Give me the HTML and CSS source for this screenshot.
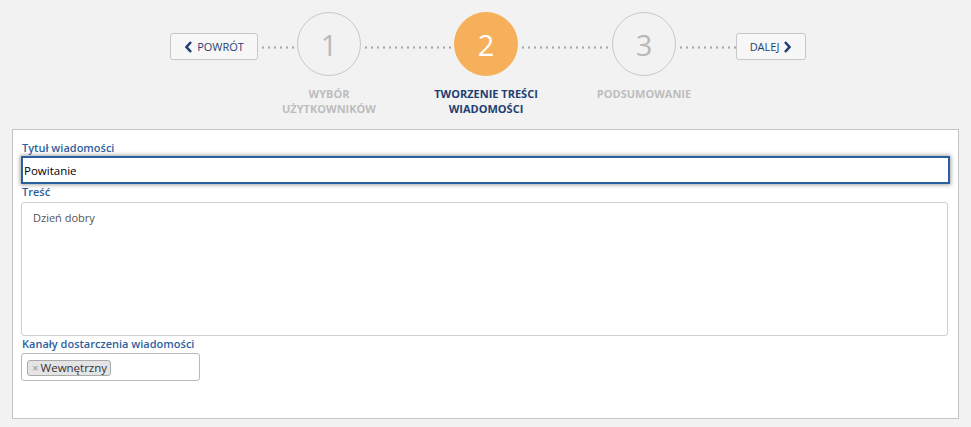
FILE: index.html
```html
<!DOCTYPE html>
<html lang="pl">
<head>
    <meta charset="UTF-8">
    <meta name="viewport" content="width=device-width, initial-scale=1.0">
    <title>Nowa wiadomość</title>
    <link rel="stylesheet" href="styles.css">
</head>
<body>

<div class="wizard">
    <button class="nav-btn prev">
        <svg width="9" height="12" viewBox="0 0 9 12"><path d="M7 1 L2.5 6 L7 11" fill="none" stroke="#1f3f73" stroke-width="2.6"/></svg>
        POWRÓT
    </button>
    <div class="dots w39"></div>
    <div class="step">
        <div class="circle">1</div>
        <div class="step-label">WYBÓR<br>UŻYTKOWNIKÓW</div>
    </div>
    <div class="dots w93"></div>
    <div class="step active">
        <div class="circle">2</div>
        <div class="step-label">TWORZENIE TREŚCI<br>WIADOMOŚCI</div>
    </div>
    <div class="dots w94"></div>
    <div class="step">
        <div class="circle">3</div>
        <div class="step-label">PODSUMOWANIE</div>
    </div>
    <div class="dots w60"></div>
    <button class="nav-btn next">
        DALEJ
        <svg width="9" height="12" viewBox="0 0 9 12"><path d="M2 1 L6.5 6 L2 11" fill="none" stroke="#1f3f73" stroke-width="2.6"/></svg>
    </button>
</div>

<div class="panel">
    <label class="field-label">Tytuł wiadomości</label>
    <input class="title-input" type="text" value="Powitanie">

    <label class="field-label">Treść</label>
    <div class="content-box">Dzień dobry</div>

    <label class="field-label">Kanały dostarczenia wiadomości</label>
    <div class="channels">
        <span class="tag"><span class="tag-x">×</span>Wewnętrzny</span>
    </div>
</div>

</body>
</html>
```

FILE: styles.css
```css
body {
    margin: 0;
    background-color: #f2f2f2;
    font-family: 'Open Sans', 'Noto Sans', sans-serif;
    color: #333;
}
.wizard {
    display: flex;
    justify-content: center;
    align-items: flex-start;
    height: 129px;
    padding: 12px 0 0 5px;
    box-sizing: border-box;
}
.nav-btn {
    display: flex;
    align-items: center;
    justify-content: center;
    gap: 4px;
    margin-top: 21px;
    height: 27px;
    padding: 0;
    background-color: #f7f7f7;
    border: 1px solid #c8c8c8;
    border-radius: 3px;
    font-family: 'Open Sans', sans-serif;
    font-size: 11px;
    color: #1f3f73;
    box-sizing: border-box;
}
.prev {
    width: 88px;
}
.next {
    width: 70px;
}
.dots {
    margin-top: 34px;
    height: 3px;
    background-image: radial-gradient(circle, #aaa 1px, transparent 1.3px);
    background-size: 6px 3px;
    background-position: 2px 0;
}
.w39 { width: 39px; }
.w93 { width: 93px; }
.w94 { width: 94px; }
.w60 { width: 60px; }
.step {
    width: 64px;
}
.circle {
    width: 64px;
    height: 64px;
    border: 1px solid #c8c8c8;
    border-radius: 50%;
    box-sizing: border-box;
    display: flex;
    align-items: center;
    justify-content: center;
    font-size: 29px;
    color: #b8b8b8;
}
.step-label {
    width: 160px;
    margin: 10px 0 0 -48px;
    text-align: center;
    font-size: 11px;
    font-weight: 700;
    line-height: 15px;
    color: #bdbdbd;
}
.active .circle {
    background-color: #f6b05c;
    border-color: #f6b05c;
    color: #fff;
}
.active .step-label {
    color: #1f3f73;
}
.panel {
    margin: 0 12px;
    height: 290px;
    padding: 10px 8px 0 8px;
    background-color: #fff;
    border: 1px solid #c4c4c4;
    box-sizing: border-box;
}
.field-label {
    display: block;
    height: 16px;
    line-height: 16px;
    padding-left: 1px;
    font-size: 11px;
    font-weight: 600;
    color: #2d5f9e;
}
.title-input {
    display: block;
    width: 929px;
    height: 28px;
    margin: 0;
    padding: 0 1px;
    border: 2px solid #2a5f9f;
    box-shadow: 0 0 4px 1px rgba(0, 0, 0, 0.35);
    box-sizing: border-box;
    font-family: 'Open Sans', sans-serif;
    font-size: 11.5px;
    color: #000;
    outline: none;
}
.content-box {
    margin-top: 2px;
    width: 927px;
    height: 134px;
    padding: 7px 11px;
    border: 1px solid #cfcfcf;
    border-radius: 3px;
    box-sizing: border-box;
    font-size: 11px;
    color: #555;
}
.channels {
    display: flex;
    align-items: flex-start;
    margin-top: 1px;
    width: 179px;
    height: 28px;
    padding: 6px 0 0 5px;
    border: 1px solid #b8b8b8;
    border-radius: 3px;
    box-sizing: border-box;
}
.tag {
    display: inline-flex;
    align-items: center;
    height: 16px;
    padding: 0 3px 0 4px;
    background-color: #e4e4e4;
    border: 1px solid #aaa;
    border-radius: 3px;
    box-sizing: border-box;
    font-size: 11.5px;
    line-height: 14px;
    color: #333;
}
.tag-x {
    color: #999;
    margin-right: 2px;
}
```
